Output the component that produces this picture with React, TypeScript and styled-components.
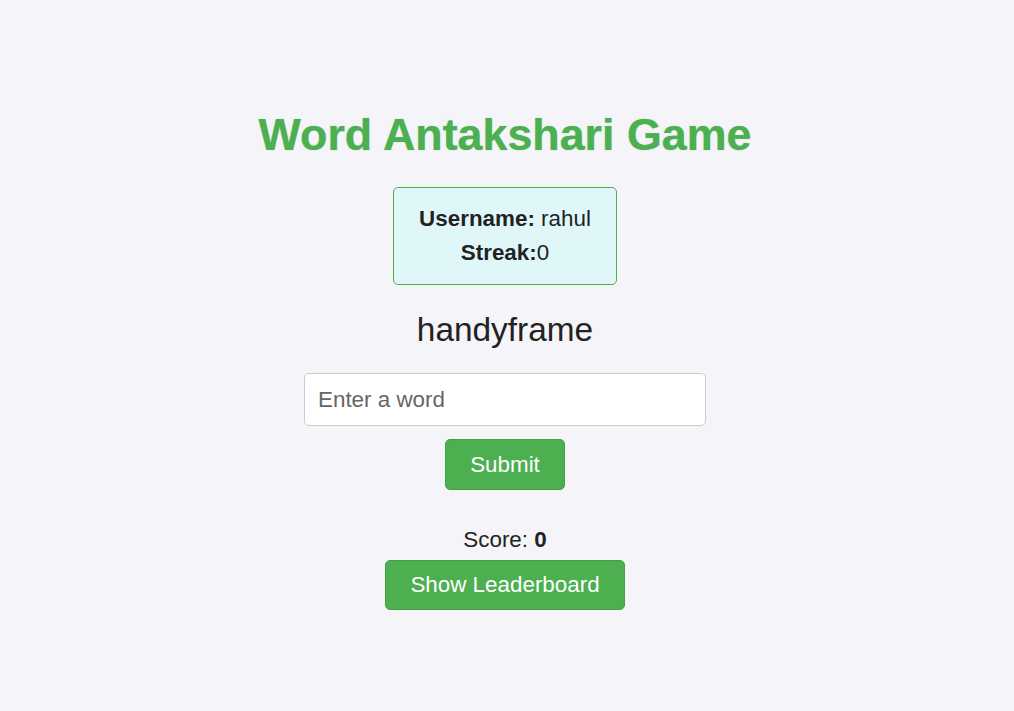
import styled, { createGlobalStyle } from "styled-components";
import { useState } from "react";

const GlobalStyle = createGlobalStyle`
  html, body {
    margin: 0;
    padding: 0;
    background-color: #f4f4f9;
    font-family: "Liberation Sans", Arial, sans-serif;
    color: #222;
  }
`;

function App() {
  const [word, setWord] = useState("");
  const [score] = useState(0);

  return (
    <Page>
      <GlobalStyle />
      <Title>Word Antakshari Game</Title>
      <UserCard>
        <CardLine>
          <b>Username:</b> rahul
        </CardLine>
        <CardLine>
          <b>Streak:</b>0
        </CardLine>
      </UserCard>
      <CurrentWord>handyframe</CurrentWord>
      <WordInput
        placeholder="Enter a word"
        value={word}
        onChange={(e) => setWord(e.target.value)}
      />
      <GreenButton $height={51}>Submit</GreenButton>
      <Score>
        Score: <b>{score}</b>
      </Score>
      <GreenButton $height={50}>Show Leaderboard</GreenButton>
    </Page>
  );
}

export default App;

const Page = styled.div`
  display: flex;
  flex-direction: column;
  align-items: center;
  padding-top: 109px;
  padding-right: 4px;
  min-height: 100vh;
  box-sizing: border-box;
`;

const Title = styled.h1`
  margin: 0 0 27px;
  font-size: 44.8px;
  font-weight: 700;
  color: #4caf50;
  text-shadow: 0 0 1px rgba(30, 140, 40, 0.5);
`;

const UserCard = styled.div`
  width: 224px;
  box-sizing: border-box;
  padding: 10px 20px;
  background-color: #e0f7fa;
  border: 1px solid #4caf50;
  border-radius: 5px;
  text-align: center;
`;

const CardLine = styled.p`
  margin: 8px 0;
  font-size: 22.4px;
  white-space: nowrap;
`;

const CurrentWord = styled.h2`
  margin: 26px 0 24px;
  font-size: 33.4px;
  font-weight: 400;
  color: #222;
`;

const WordInput = styled.input`
  width: 402px;
  height: 53px;
  box-sizing: border-box;
  padding: 0 13px;
  font-family: "Liberation Sans", Arial, sans-serif;
  font-size: 22.4px;
  color: #222;
  background: #fff;
  border: 1px solid #ccc;
  border-radius: 5px;
  outline: none;
  margin-bottom: 13px;

  &::placeholder {
    color: #666;
  }
`;

const GreenButton = styled.button<{ $height: number }>`
  height: ${(p) => p.$height}px;
  box-sizing: border-box;
  padding: 0 24px;
  font-family: "Liberation Sans", Arial, sans-serif;
  font-size: 22.4px;
  color: #fff;
  background-color: #4caf50;
  border: 1px solid #43a047;
  border-radius: 5px;
  cursor: pointer;
`;

const Score = styled.p`
  margin: 37px 0 7px;
  font-size: 22.4px;
`;
